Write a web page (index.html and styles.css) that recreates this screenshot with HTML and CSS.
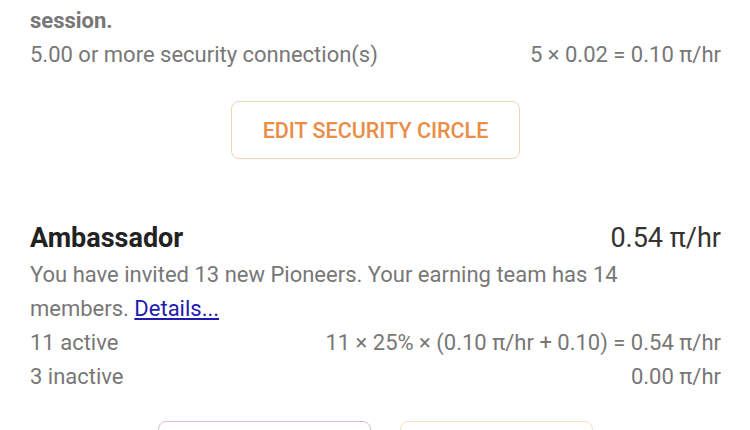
FILE: index.html
```html
<!DOCTYPE html>
<html lang="en">
<head>
<meta charset="UTF-8">
<meta name="viewport" content="width=device-width, initial-scale=1.0">
<title>Mining Rate</title>
<link rel="stylesheet" href="styles.css">
</head>
<body>
  <div class="panel">
    <div class="section">
      <p class="note">session.</p>
      <div class="row">
        <span>5.00 or more security connection(s)</span>
        <span>5 × 0.02 = 0.10 π/hr</span>
      </div>
      <div class="actions">
        <button class="btn btn-orange">EDIT SECURITY CIRCLE</button>
      </div>
    </div>

    <div class="section ambassador">
      <div class="head">
        <h2>Ambassador</h2>
        <span class="rate">0.54 π/hr</span>
      </div>
      <p class="text">You have invited 13 new Pioneers. Your earning team has 14 members. <a href="#">Details...</a></p>
      <div class="row">
        <span>11 active</span>
        <span>11 × 25% × (0.10 π/hr + 0.10) = 0.54 π/hr</span>
      </div>
      <div class="row">
        <span>3 inactive</span>
        <span>0.00 π/hr</span>
      </div>
      <div class="actions pair">
        <button class="btn btn-purple"></button>
        <button class="btn btn-orange-light"></button>
      </div>
    </div>
  </div>
</body>
</html>
```

FILE: styles.css
```css
body {
  margin: 0;
  padding: 0;
  background: #fff;
  font-family: Roboto, "Liberation Sans", sans-serif;
  overflow: hidden;
}

.panel {
  padding: 4px 29px 0 30px;
}

.note {
  margin: 0;
  font-size: 22px;
  line-height: 34px;
  font-weight: 700;
  color: #777;
}

.row {
  display: flex;
  justify-content: space-between;
  font-size: 22px;
  line-height: 34px;
  color: #777;
}

.actions {
  display: flex;
  justify-content: center;
  margin-top: 29px;
}

.btn {
  height: 58px;
  background: #fff;
  border-radius: 8px;
  font-family: inherit;
  font-size: 21.5px;
  font-weight: 500;
  cursor: pointer;
}

.btn-orange {
  width: 289px;
  border: 1.5px solid #f1d3b6;
  color: #e98d47;
}

.ambassador {
  margin-top: 62px;
}

.head {
  display: flex;
  justify-content: space-between;
  align-items: center;
  line-height: 34px;
}

.head h2 {
  margin: 0;
  font-size: 27px;
  font-weight: 700;
  color: #222;
}

.rate {
  font-size: 27px;
  color: #333;
}

.text {
  margin: 3px 0 0;
  padding-right: 80px;
  font-size: 22px;
  line-height: 34px;
  color: #777;
}

.text a {
  color: #1f1bb0;
}

.pair {
  gap: 29px;
  margin-top: 27px;
}

.btn-purple {
  width: 213px;
  border: 1.5px solid #d8bcda;
}

.btn-orange-light {
  width: 193px;
  border: 1.5px solid #f5e0c6;
}
```
